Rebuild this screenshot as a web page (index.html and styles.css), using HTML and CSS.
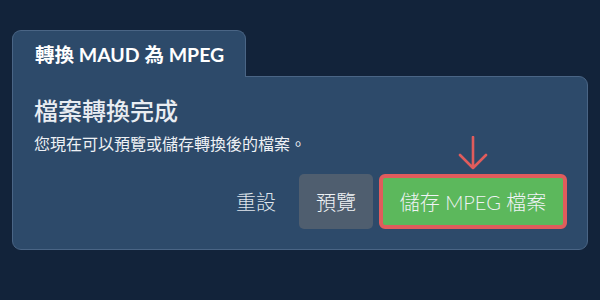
FILE: index.html
```html
<!DOCTYPE html>
<html lang="zh-Hant">
<head>
    <meta charset="UTF-8">
    <meta name="viewport" content="width=device-width, initial-scale=1.0">
    <title>轉換 MAUD 為 MPEG</title>
    <link rel="stylesheet" href="styles.css">
</head>
<body>

    <div class="converter">
        <!-- Tab header -->
        <div class="tab">轉換 MAUD 為 MPEG</div>

        <!-- Result panel -->
        <div class="panel">
            <h1>檔案轉換完成</h1>
            <p class="note">您現在可以預覽或儲存轉換後的檔案。</p>

            <div class="actions">
                <button class="btn btn-link">重設</button>
                <button class="btn btn-gray">預覽</button>
                <div class="save-wrap">
                    <svg class="hint-arrow" width="32" height="34" viewBox="0 0 32 34">
                        <path d="M16 1 V32 M3 19 L16 32 L29 19" fill="none" stroke="#e05c5c" stroke-width="2.6" stroke-linecap="round" stroke-linejoin="round"/>
                    </svg>
                    <button class="btn btn-save">儲存 MPEG 檔案</button>
                </div>
            </div>
        </div>
    </div>

</body>
</html>
```

FILE: styles.css
```css
* {
    margin: 0;
    padding: 0;
    box-sizing: border-box;
    font-family: Lato, "Noto Sans CJK TC", sans-serif;
}

body {
    background-color: #12233a;
    padding: 30px 12px 0 12px;
}

.converter {
    width: 576px;
}

.tab {
    display: inline-block;
    width: 234px;
    height: 47px;
    margin-bottom: -1px;
    padding: 13px 0 0 22px;
    background-color: #2d4a6a;
    border: 1px solid #4a6585;
    border-bottom: none;
    border-radius: 9px 9px 0 0;
    color: #ffffff;
    font-size: 19.5px;
    font-weight: bold;
    line-height: 22px;
    position: relative;
    z-index: 1;
}

.panel {
    background-color: #2d4a6a;
    border: 1px solid #4a6585;
    border-radius: 0 9px 9px 9px;
    padding: 19px 20px 20px 21px;
}

h1 {
    color: #e9edf2;
    font-size: 24px;
    font-weight: 500;
    line-height: 29px;
}

.note {
    color: #eef1f5;
    font-size: 16px;
    line-height: 24px;
    margin-top: 7px;
}

.actions {
    display: flex;
    justify-content: flex-end;
    align-items: center;
    gap: 6px;
    margin-top: 18px;
}

.btn {
    height: 55px;
    padding: 0 17px;
    border: none;
    border-radius: 5px;
    font-size: 20px;
    font-weight: 300;
    color: #f0f3f6;
    cursor: pointer;
}

.btn-link {
    background: none;
    color: #dfe5ec;
}

.btn-gray {
    background-color: #4f5e6f;
}

.save-wrap {
    position: relative;
}

.hint-arrow {
    position: absolute;
    left: 50%;
    top: -38px;
    margin-left: -16px;
}

.btn-save {
    width: 188px;
    background-color: #5cb85c;
    border: 4px solid #e05c5c;
    border-radius: 6px;
    padding: 0;
}
```
